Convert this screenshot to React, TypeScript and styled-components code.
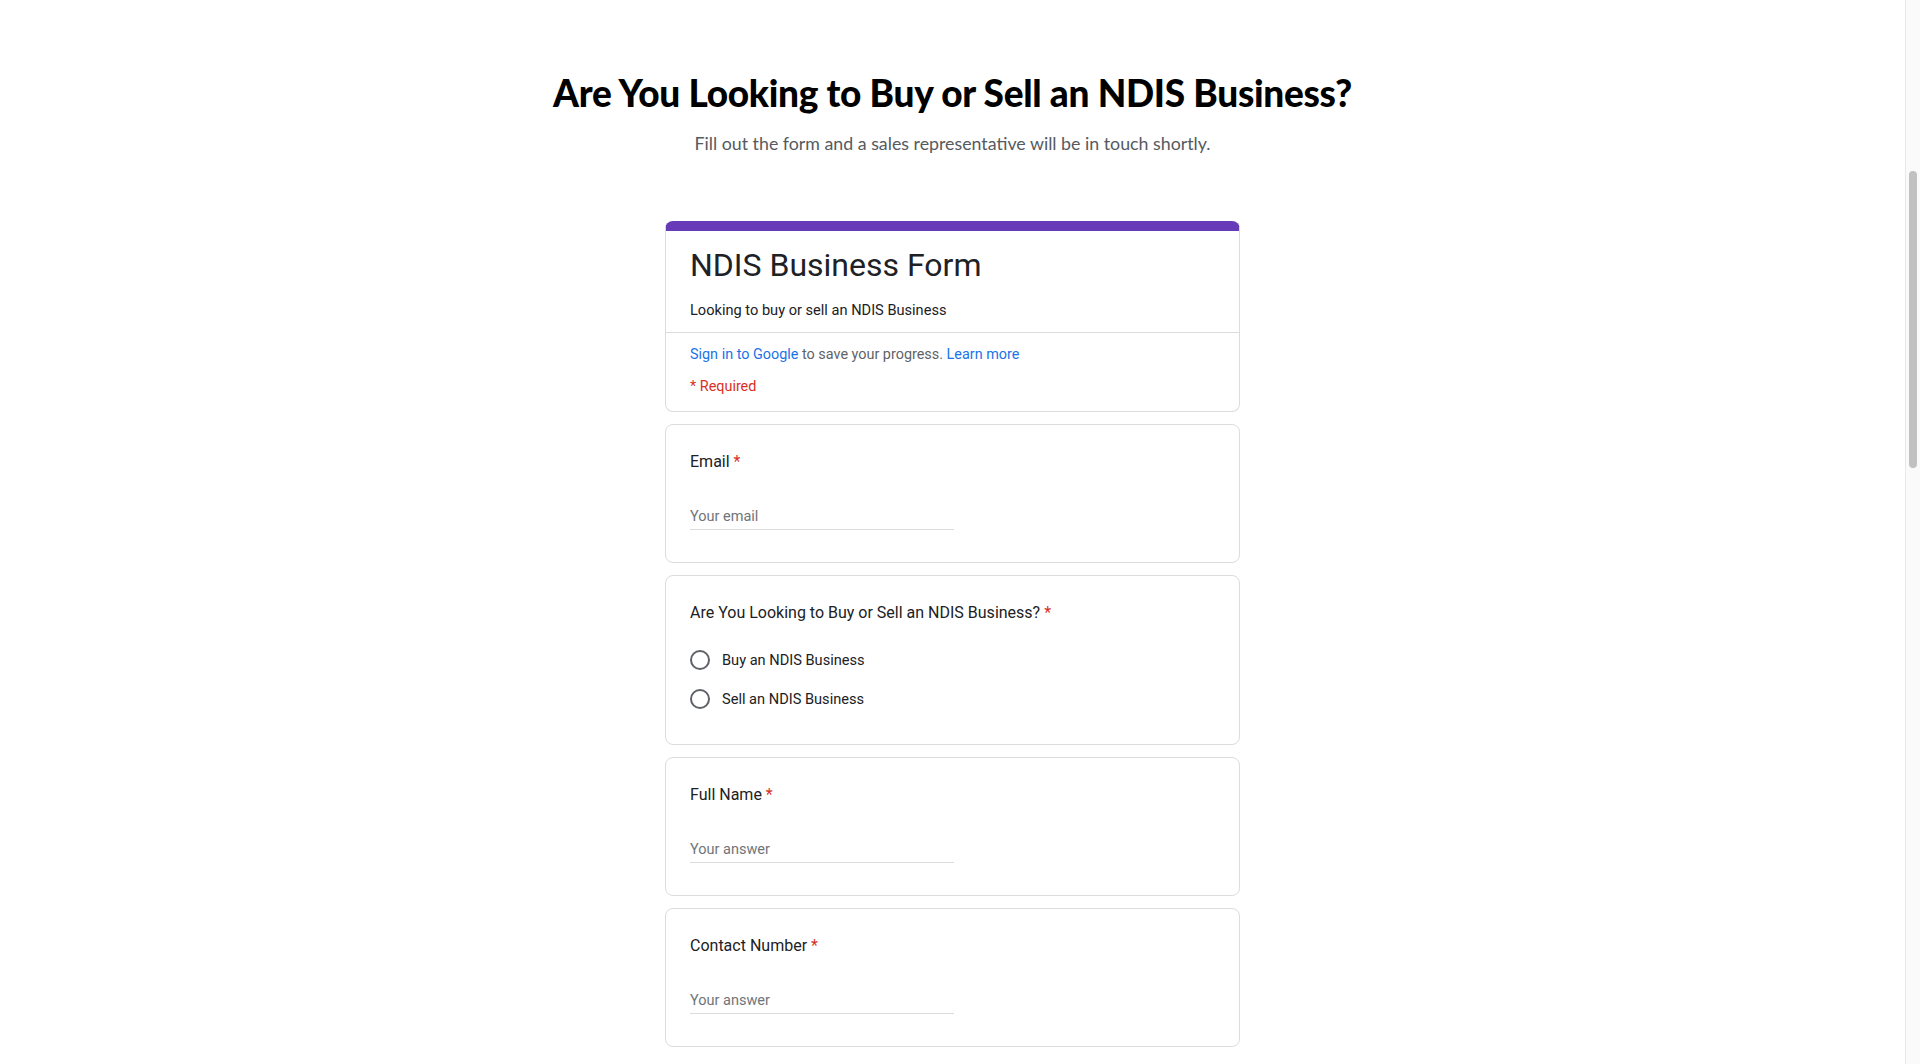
import React from 'react';
import styled, { createGlobalStyle } from 'styled-components';

const GlobalStyle = createGlobalStyle`
  html, body {
    margin: 0;
    padding: 0;
    overflow: hidden;
    background: #ffffff;
  }
  * {
    box-sizing: border-box;
  }
`;

const questions = [
  { label: 'Email', placeholder: 'Your email' },
];

const textQuestions = [
  { label: 'Full Name', placeholder: 'Your answer' },
  { label: 'Contact Number', placeholder: 'Your answer' },
];

const options = ['Buy an NDIS Business', 'Sell an NDIS Business'];

const TextQuestion = ({ label, placeholder }) => (
  <Card>
    <QuestionTitle>
      {label} <Star>*</Star>
    </QuestionTitle>
    <AnswerLine>{placeholder}</AnswerLine>
  </Card>
);

const App = () => {
  return (
    <Page>
      <GlobalStyle />
      <Hero>
        <h1>Are You Looking to Buy or Sell an NDIS Business?</h1>
        <p>Fill out the form and a sales representative will be in touch shortly.</p>
      </Hero>

      <Form>
        <HeaderCard>
          <HeaderTop>
            <FormTitle>NDIS Business Form</FormTitle>
            <FormDescription>Looking to buy or sell an NDIS Business</FormDescription>
          </HeaderTop>
          <HeaderBottom>
            <SignIn>
              <a>Sign in to Google</a> to save your progress. <a>Learn more</a>
            </SignIn>
            <Required>* Required</Required>
          </HeaderBottom>
        </HeaderCard>

        {questions.map((q) => (
          <TextQuestion key={q.label} {...q} />
        ))}

        <Card>
          <QuestionTitle>
            Are You Looking to Buy or Sell an NDIS Business? <Star>*</Star>
          </QuestionTitle>
          <Options>
            {options.map((o) => (
              <Option key={o}>
                <Radio />
                <span>{o}</span>
              </Option>
            ))}
          </Options>
        </Card>

        {textQuestions.map((q) => (
          <TextQuestion key={q.label} {...q} />
        ))}
      </Form>

      <ScrollTrack>
        <ScrollThumb />
      </ScrollTrack>
    </Page>
  );
};

export default App;

const Page = styled.div`
  padding: 71px 15px 40px 0;
  display: flex;
  flex-direction: column;
  align-items: center;
`;

const Hero = styled.header`
  text-align: center;
  font-family: Lato, 'Open Sans', sans-serif;

  h1 {
    margin: 0;
    font-size: 37px;
    line-height: 44px;
    font-weight: 900;
    color: #000000;
    letter-spacing: -0.3px;
  }

  p {
    margin: 17px 0 0;
    font-size: 17.8px;
    line-height: 22px;
    color: #555a60;
  }
`;

const Form = styled.main`
  width: 575px;
  margin-top: 67px;
  display: flex;
  flex-direction: column;
  gap: 12px;
  font-family: Roboto, Arial, sans-serif;
  color: #202124;
`;

const Card = styled.section`
  background: #ffffff;
  border: 1px solid #dadce0;
  border-radius: 8px;
  padding: 25px 24px 24px;
`;

const HeaderCard = styled.section`
  background: #ffffff;
  border: 1px solid #dadce0;
  border-top: 10px solid #673ab7;
  border-radius: 8px;
`;

const HeaderTop = styled.div`
  padding: 14px 24px 12px;
  border-bottom: 1px solid #dadce0;
`;

const FormTitle = styled.h2`
  margin: 0;
  font-size: 32px;
  line-height: 40px;
  font-weight: 400;
  color: #202124;
`;

const FormDescription = styled.p`
  margin: 15px 0 0;
  font-size: 14.6px;
  line-height: 20px;
  color: #202124;
`;

const HeaderBottom = styled.div`
  padding: 12px 24px 14px;
  font-size: 14.4px;
  line-height: 20px;
`;

const SignIn = styled.div`
  color: #5f6368;

  a {
    color: #1a73e8;
    text-decoration: none;
    cursor: pointer;
  }
`;

const Required = styled.div`
  margin-top: 12px;
  color: #d93025;
`;

const QuestionTitle = styled.div`
  font-size: 16px;
  line-height: 24px;
  color: #202124;
`;

const Star = styled.span`
  color: #d93025;
`;

const AnswerLine = styled.div`
  width: 264px;
  margin-top: 33px;
  margin-bottom: 8px;
  padding-bottom: 2px;
  font-size: 14.5px;
  line-height: 20px;
  color: #70757a;
  border-bottom: 1px solid #dadce0;
`;

const Options = styled.div`
  margin-top: 15px;
  margin-bottom: 2px;
  display: flex;
  flex-direction: column;
`;

const Option = styled.label`
  height: 39px;
  display: flex;
  align-items: center;
  gap: 12px;
  font-size: 14.6px;
  color: #202124;
`;

const Radio = styled.span`
  width: 20px;
  height: 20px;
  border-radius: 50%;
  border: 2px solid #5f6368;
  flex: none;
`;

const ScrollTrack = styled.div`
  position: fixed;
  top: 0;
  right: 0;
  bottom: 0;
  width: 15px;
  background: #fafafa;
  border-left: 1px solid #e8e8e8;
`;

const ScrollThumb = styled.div`
  position: absolute;
  top: 171px;
  left: 3px;
  width: 8px;
  height: 297px;
  border-radius: 4px;
  background: #c1c1c1;
`;
